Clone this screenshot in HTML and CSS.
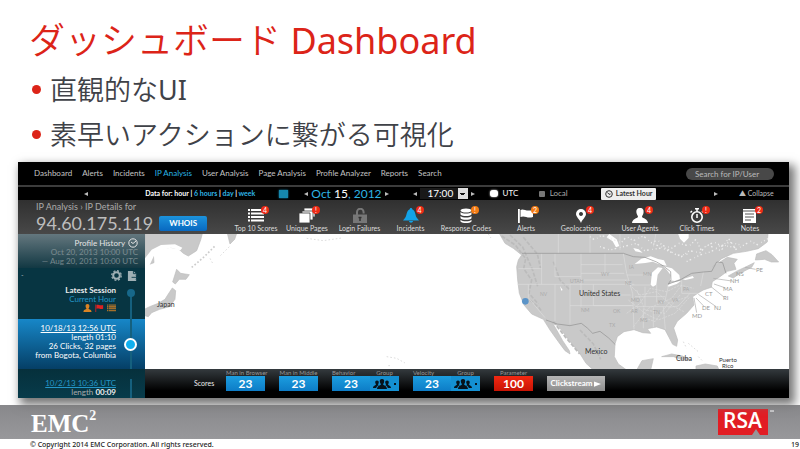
FILE: index.html
```html
<!DOCTYPE html>
<html lang="ja">
<head>
<meta charset="utf-8">
<title>ダッシュボード Dashboard</title>
<link rel="stylesheet" href="styles.css">
</head>
<body>
<svg class="defs" aria-hidden="true">
  <symbol id="list" viewBox="0 0 16 13"><path d="M0 1h2M3 1h13M0 4.500h2M3 4.500h13M0 8h2M3 8h13M0 11.500h2M3 11.500h13" stroke="currentColor" stroke-width="1.800"/></symbol>
  <symbol id="person" viewBox="0 0 16 15"><path d="M8 0c3 0 4 2 3.500 5-.4 2-1.500 2.500-1.500 4 1 1.500 5.500 1.500 6 6H0c.5-4.500 5-4.500 6-6 0-1.500-1.100-2-1.500-4C4 2 5 0 8 0z" fill="currentColor"/></symbol>
  <symbol id="flag" viewBox="0 0 16 15"><path d="M0 1h1.800v14H0zM2.500 2c3-2 5 2 12.500 0v7c-6 2-8-2-12.500 0z" fill="currentColor"/></symbol>
  <symbol id="group" viewBox="0 0 18 10"><path d="M9 0c2 0 2.600 1.500 2 3.500L10 5.500c1 1 3.500 1 4 4.500H4c.5-3.500 3-3.500 4-4.500L7 3.500C6.400 1.500 7 0 9 0zM4 1.500c1.500 0 2 1 1.700 2.500L5 5.500l.7.8C4 7 3.500 8 3.200 9H0c.2-2.500 2-2 3-3.500L2.300 4C2 2.500 2.500 1.500 4 1.500zM14 1.500c-1.500 0-2 1-1.700 2.500l.7 1.500-.7.8C14 7 14.500 8 14.800 9H18c-.2-2.500-2-2-3-3.500l.7-1.500c.3-1.500-.2-2.500-1.700-2.500z" fill="currentColor"/></symbol>
</svg>
<main class="slide">
  <header class="intro">
    <h1>ダッシュボード <span>Dashboard</span></h1>
    <ul>
      <li><p>直観的な<span>UI</span></p></li>
      <li><p>素早いアクションに繋がる可視化</p></li>
    </ul>
  </header>

  <section class="app">
    <nav class="nav">
      <a href="#">Dashboard</a><a href="#">Alerts</a><a href="#">Incidents</a><a href="#" class="current">IP Analysis</a><a href="#">User Analysis</a><a href="#">Page Analysis</a><a href="#">Profile Analyzer</a><a href="#">Reports</a><a href="#">Search</a>
      <input type="search" class="search" placeholder="Search for IP/User" aria-label="Search for IP/User">
    </nav>

    <div class="timebar">
      <button class="arrow left" aria-label="Earlier"></button>
      <div class="range">Data for: hour | <a href="#">6 hours</a> | <a href="#">day</a> | <a href="#">week</a></div>
      <button class="calendar" aria-label="Calendar"></button>
      <div class="date"><button class="arrow left" aria-label="Previous day"></button><span>Oct <b>15</b>, 2012</span><button class="arrow" aria-label="Next day"></button></div>
      <div class="hour"><button class="arrow left" aria-label="Previous hour"></button><select aria-label="Hour"><option>17:00</option></select><button class="arrow" aria-label="Next hour"></button></div>
      <label class="zone"><input type="radio" name="zone" checked>UTC</label>
      <label class="zone muted"><input type="radio" name="zone">Local</label>
      <button class="latest"><svg viewBox="0 0 8 8"><circle cx="4" cy="4" r="3.300"/><path d="M2.500 2.500 4 4.300 5.500 4"/></svg>Latest Hour</button>
      <button class="arrow" aria-label="Later"></button>
      <button class="collapse">▲ Collapse</button>
    </div>

    <div class="toolbar">
      <div class="ip">
        <p>IP Analysis › IP Details for</p>
        <div class="address"><h2>94.60.175.119</h2><button class="whois">WHOIS</button></div>
      </div>
      <button class="tool"><span class="icon"><svg viewBox="0 0 16 15"><use href="#list" width="16" height="13" y="1"/></svg><i>4</i></span>Top 10 Scores</button>
      <button class="tool"><span class="icon"><svg viewBox="0 0 16 15"><g fill="currentColor" stroke="#3a3a3a" stroke-width=".8"><path d="M5 0h11v9H5z"/><path d="M3 3h11v9H3z"/><path d="M0 5h11v10H0z"/></g></svg><i>!</i></span>Unique Pages</button>
      <button class="tool"><span class="icon dim"><svg viewBox="0 0 16 15"><path d="M5 7V4a3.300 3.300 0 0 1 6.600 0v1.500" fill="none" stroke="currentColor" stroke-width="2"/><path d="M1 6.500h14V15H1z" fill="currentColor"/><path d="M8 9v4M6.500 9.500h3" stroke="#333" stroke-width="1.500"/></svg></span>Login Failures</button>
      <button class="tool"><span class="icon blue"><svg viewBox="0 0 16 15"><path d="M8 0c1 0 1.200.6 1.200 1.300C13 3 12 8 14 10l2 2.500H0L2 10c2-2 1-7 4.800-8.700C6.800.6 7 0 8 0zM6 13h4c0 2.300-4 2.300-4 0z" fill="currentColor"/></svg><i>4</i></span>Incidents</button>
      <button class="tool"><span class="icon"><svg viewBox="0 0 16 15"><g fill="currentColor"><ellipse cx="8" cy="2.500" rx="5.500" ry="2"/><path d="M2.500 4c2 2 9 2 11 0v2.500c-2 2-9 2-11 0zM2.500 8c2 2 9 2 11 0v2.300c-2 2-9 2-11 0zM2.500 11.800c2 2 9 2 11 0v1.700c-2 2-9 2-11 0z"/></g></svg><i class="warn">!</i></span>Response Codes</button>
      <button class="tool"><span class="icon"><svg viewBox="0 0 16 15"><use href="#flag" width="16" height="15"/></svg><i class="warn">2</i></span>Alerts</button>
      <button class="tool"><span class="icon"><svg viewBox="0 0 16 15"><path fill-rule="evenodd" d="M8 1a5 5 0 0 1 5 5c0 3-3.500 5-5 9-1.500-4-5-6-5-9a5 5 0 0 1 5-5zm0 3a2 2 0 1 0 .01 0z" fill="currentColor"/></svg><i>4</i></span>Geolocations</button>
      <button class="tool"><span class="icon"><svg viewBox="0 0 16 15"><use href="#person" width="16" height="15"/></svg><i>4</i></span>User Agents</button>
      <button class="tool"><span class="icon"><svg viewBox="0 0 16 15"><circle cx="8" cy="9" r="5.200" fill="none" stroke="currentColor" stroke-width="1.600"/><path d="M6 .8h4M8 1v2.500M8 6v4M13 3l1.500 1.500M3 3 1.500 4.500" stroke="currentColor" stroke-width="1.500"/></svg><i>!</i></span>Click Times</button>
      <button class="tool"><span class="icon"><svg viewBox="0 0 16 15"><path d="M1 1h13v14H1z" fill="currentColor"/><path d="M1 3h13M3 6h9M3 9h9M3 12h6" stroke="#555"/></svg><i>2</i></span>Notes</button>
    </div>

    <div class="body">
      <aside class="sidebar">
        <div class="history">
          <h3>Profile History <svg viewBox="0 0 10 10"><circle cx="5" cy="5" r="4.200"/><path d="M3 4l2 1.500L8 3"/></svg></h3>
          <p>Oct 20, 2013 10:00 UTC<br>— Aug 20, 2013 10:00 UTC</p>
        </div>
        <div class="actions">
          <span>-</span>
          <button aria-label="Settings"><svg viewBox="0 0 12 12"><circle cx="6" cy="6" r="3.600" fill="none" stroke="currentColor" stroke-width="2.200"/><circle cx="6" cy="6" r="5.200" fill="none" stroke="currentColor" stroke-width="1.400" stroke-dasharray="2.200 1.880"/></svg></button>
          <button aria-label="Export"><svg viewBox="0 0 12 12"><path d="M1 1h6l3 3v8H1z" fill="currentColor"/><path d="M7 1v3h3M5 8h7M9.500 6 12 8l-2.500 2" fill="none" stroke="#0b3c4b"/></svg></button>
        </div>
        <article class="session first">
          <div class="info">
            <h4>Latest Session</h4>
            <a href="#" class="plain">Current Hour</a>
            <div class="marks">
              <svg class="orange" viewBox="0 0 16 15"><use href="#person" width="16" height="15"/></svg>
              <svg class="red" viewBox="0 0 16 15"><use href="#flag" width="16" height="15"/></svg>
              <svg class="orange" viewBox="0 0 16 13"><use href="#list" width="16" height="13"/></svg>
            </div>
          </div>
          <div class="track"><span class="dot"></span></div>
        </article>
        <article class="session active">
          <div class="info">
            <a href="#">10/18/13 12:56 UTC</a>
            <p>length 01:10<br>26 Clicks, 32 pages<br>from Bogota, Columbia</p>
          </div>
          <div class="track"><span class="dot ring"></span></div>
        </article>
        <article class="session last">
          <div class="info">
            <a href="#">10/2/13 10:36 UTC</a>
            <p>length <b>00:09</b></p>
          </div>
          <div class="track"></div>
        </article>
      </aside>

      <div class="main">
        <svg class="map" viewBox="0 0 644 135" preserveAspectRatio="xMidYMid slice" role="img" aria-label="Map">
          <g transform="translate(-135 -4) scale(.3333)">
            <path class="land" d="M405 0H580L572 30 560 62 535 78 520 70 505 56 480 52 450 58 430 72 432 98 405 108z"/>
            <path class="land" d="M500 118l12 12 26 4-10 14-20 0-12 14-8-6zM487 174l10 8-2 26-16 22-30 8-24 10-10 12-14-4-6-14 24-12 26-10 20-12 10-16z"/>
            <path class="sea" d="M405 85l20-26 28-14 42-2 22 10-6 8-28-8-28 8-22 14-14 30-14 8z"/>
            <path class="isles" d="M545 112l15-12 25-22 30-30"/>
          </g>
          <g transform="translate(65 -4) scale(.3333)">
            <path class="land" d="M52 10h28l-6 18-14 14z"/>
            <path class="isles faint" d="M58 50 30 78M0 85l8 15M290 25l50 7 55-8M530 380l30 5 25 14M535 407l10 0M835 12l8 12"/>
          </g>
          <g transform="translate(345 -4) scale(.3333)">
            <path class="land" d="M22 0 45 40 70 55 95 75 85 90 80 110 83 150 88 190 102 225 125 252 160 268 180 300 205 335 225 362 240 372 238 362 218 332 200 300 188 280 205 288 238 332 268 368 288 400 310 420H410L385 402 373 380 375 342 382 320 402 305 432 299 458 308 482 310 472 296 500 291 525 299 537 322 548 343 560 349 563 330 551 294 562 274 590 250 612 225 608 200 626 188 640 180 664 172 667 155 690 140 712 124 738 118 732 100 742 88 712 82 690 96 668 110 695 86 730 70 770 64 805 56 832 36 835 0z"/>
            <path class="land" d="M800 72l28-10 18 12 20 22-22 0-20-8-28 2zM715 138l28-16 30-14 20-10-8 14-35 18-20 14zM440 420l16-28 34-6-8 34zM515 380l30-8 32 6 28 12-32-2-22-8zM618 408l28-6 36 6 6 14h-70z"/>
            <path class="sea" d="M434 102l20-16 28-7 22 8 18 4 8 16-22-4-20-8-22 4zM482 164l4-36 18-16 14 2-15 20-4 30-10 6zM518 108l28 7 22 20 2 12-16 6-14-2 2-16-12-16zM532 168l12-10 30-6-14 10-24 8zM578 148l30-10 4 6-26 6zM358 12l22 16 8 20-10 4-10-18-18-12zM560 0l10 26 12 12 14-14 0-24zM430 54l16 4 12 10-22-4zM210 168l8 12-4 2z"/>
            <path class="speck" d="M300 20l14 10 20-14 60 22 16-18 20 12 30-14 24 20 20-8 12 16 30 8 22-14 30 8 20-20 14 30 40-22 26 14 18-24 22 32 44-24 20 10 32-18M330 50l30 10 80-20 24 22 50-8 60 26 24-18 32 6 22-24 40 18 24-26 32 8M590 95l40-20 34-10 28-20 46 8M490 42l40 14 30 20 38-4"/>
            <path class="ridge" d="M35 18l42 28 30 40-6 30 24 34-8 40 28 32M60 15l38 36 30 70 15 48M100 22l42 50 10 44M190 95l20 55 28 28M120 210l28 24 8 12M190 275l35 45 44 52M270 300l40 42 22 46"/>
            <path class="state" d="M85 116h70M83 163h350M155 70v93M195 70v70h78M273 70v160M195 163v110M115 163v40l50 60M240 163v118M273 104h125M273 130h130M273 150h140M310 195h112M310 163v64h115M240 227h190M345 70v60M400 70l10 60 18 60 4 108M435 200h90M440 230h100M465 170v60M500 165v52M535 168l-10 45M460 235v60M490 232v60M520 230l6 68M575 150v40h50M600 190l-35 38-30 4M640 128l-8 40M410 135h66M420 165h60M300 0v70M205 0v70M390 0v60M500 0l-10 50"/>
            <path class="roads" d="M410 250l40-30 30-45 50 10 40-20 40 10M415 210l50 40 40 20 50-20 45-50M430 290l45-55 70-30 30-40M405 150l45 45 50-10 42 40 40 20M440 180l25 60 60 10 45-55M455 260l40 15 40-55 60-20"/>
            <path class="border" d="M96 70H400L430 80 465 82 500 96 520 108 542 125 543 150 535 162 570 150 605 130 640 126 665 124 680 96 698 98 708 130M168 270l34 12 38 5 34-7 18 14 16 16 22-6 26 20 20 20"/>
            <path class="lead" d="M765 112l32 6M670 145l55 8M672 162l35 12M663 170l40 32M625 193l55 38M618 204l25 26M612 204l8 44"/>
            <path class="isles faint" d="M580 335l10 20M595 340l30 25M625 380l14 14"/>
            <circle cx="106" cy="214" r="10" class="pin"/>
          </g>
          <g class="places">
            <text x="12" y="73">Japan</text>
            <text x="434" y="62">United States</text>
            <text x="440" y="120">Mexico</text>
            <text x="531" y="127">Cuba</text>
            <text x="574" y="128" class="small">Puerto</text>
            <text x="577" y="134" class="small">Rico</text>
          </g>
          <g class="codes">
            <text x="425" y="49">UTAH</text><text x="395" y="62">NV</text><text x="456" y="42">WY</text><text x="480" y="51">NE</text><text x="484" y="35">IA</text><text x="498" y="42">MN</text><text x="436" y="78">NM</text><text x="464" y="93">TX</text><text x="468" y="79">OK</text><text x="486" y="68">MO</text><text x="486" y="79">AR</text><text x="513" y="70">KY</text><text x="508" y="80">TN</text><text x="495" y="88">MS</text><text x="527" y="68">VA</text><text x="538" y="57">PA</text>
          </g>
          <g class="codes coast">
            <text x="560" y="62">CT</text><text x="557" y="76">DE</text><text x="569" y="76">NJ</text><text x="547" y="84">MD</text><text x="578" y="66">RI</text><text x="578" y="57">MA</text><text x="585" y="49">NH</text><text x="591" y="42">NS</text><text x="611" y="38">PE</text>
          </g>
        </svg>
        <div class="scores">
          <span class="caption">Scores</span>
          <div class="score"><span>Man in Browser</span><b>23</b></div>
          <div class="score"><span>Man in Middle</span><b>23</b></div>
          <div class="score wide"><span>Behavior</span><span>Group</span><b>23</b><button aria-label="Behavior group"><svg viewBox="0 0 18 10"><use href="#group" width="18" height="10"/></svg></button></div>
          <div class="score wide"><span>Velocity</span><span>Group</span><b>23</b><button aria-label="Velocity group"><svg viewBox="0 0 18 10"><use href="#group" width="18" height="10"/></svg></button></div>
          <div class="score alert"><span>Parameter</span><b>100</b></div>
          <button class="stream">Clickstream <svg viewBox="0 0 8 6"><path d="M0 0l8 3-8 3z" fill="#fff"/></svg></button>
        </div>
      </div>
    </div>
  </section>

  <footer>
    <div class="band">
      <div class="emc">EMC<sup>2</sup></div>
      <svg class="rsa" viewBox="0 0 57 26" role="img" aria-label="RSA">
        <path fill="#e21d24" d="M0 0h50v26h-8l-4-6-4 6H0z"/>
        <text x="5" y="19">RSA</text>
        <path fill="#c9c9cb" d="M52 1h4v2h-4z"/>
      </svg>
    </div>
    <div class="legal"><span>© Copyright 2014 EMC Corporation. All rights reserved.</span><span>19</span></div>
  </footer>
</main>
</body>
</html>
```
FILE: styles.css
```css
* { box-sizing: border-box; }
body { margin: 0; background: #fff; font-family: Lato, "Noto Sans CJK JP", sans-serif; }
h1, h2, h3, h4, p, ul { margin: 0; padding: 0; font-weight: 400; }
a { color: inherit; text-decoration: none; }
button, input, select { font: inherit; color: inherit; border: 0; padding: 0; margin: 0; background: none; }
svg { display: block; }
.defs { position: absolute; width: 0; height: 0; }
.slide { display: flex; flex-direction: column; }

.intro { padding: 15px 29px 0; font-family: "Noto Sans", "Noto Sans CJK JP", sans-serif; }
.intro h1 { font-size: 36px; line-height: 52px; color: #dc2418; font-weight: 350; }
.intro span { font-weight: 400; }
.intro ul { list-style: none; padding-bottom: 4px; }
.intro p { font-weight: 350; }
.intro li { display: flex; align-items: center; gap: 9px; font-size: 27px; line-height: 45px; color: #3f4248; }
.intro li::before { content: ""; width: 9px; height: 9px; border-radius: 50%; background: #dc2418; margin-left: 3px; }

.app { position: relative; margin: 1px 11px 0 18px; background: #000; color: #ddd; font-size: 7px; line-height: 9px; box-shadow: 4px 5px 9px 2px #777; }
.nav { display: flex; align-items: center; gap: 10px; height: 23px; padding: 0 15px 0 16px; color: #c4c4c4; font-size: 8px; white-space: nowrap; }
.nav .current { color: #28b4e6; }
.search { margin-left: auto; width: 88px; height: 12px; padding: 0 0 0 4px; border-radius: 6px; background: #484848; text-align: center; appearance: none; }
.search::placeholder { color: #bbb; }

.timebar { display: grid; grid-template-columns: 66fr 61fr 134fr 25fr 108fr 77fr 49fr 62fr 113fr 25fr 50fr; align-items: center; border-top: 2px solid #3c3c3c; height: 15px; color: #fff; white-space: nowrap; }
.timebar > :first-child { grid-column: 2; }
.arrow { width: 0; height: 0; border: solid transparent; border-width: 2px 0 2px 4px; border-left-color: #bbb; }
.arrow.left { border-width: 2px 4px 2px 0; border-right-color: #bbb; }
.range { font-weight: 700; }
.range a, .date { color: #2eb4e4; }
.calendar { width: 9px; height: 8px; background: #1687ad; box-shadow: 0 0 2px #16a0d0; }
.date, .hour { display: flex; align-items: center; gap: 3px; }
.date { font-size: 12px; }
.date b { color: #fff; font-weight: 400; }
.hour select { width: 48px; height: 11px; padding: 0 14px 0 8px; border-radius: 0; appearance: none; font-size: 10px; line-height: 11px; background: linear-gradient(#111, #111) 40px 5px / 5px 1px no-repeat, linear-gradient(#111, #111) 41px 6px / 3px 1px no-repeat, linear-gradient(#ddd, #ddd) 38px 0 / 10px 11px no-repeat, #191919; }
.zone { display: flex; align-items: center; gap: 5px; font-size: 8px; }
.zone input { appearance: none; width: 8px; height: 7px; border-radius: 3px; background: #fff; box-shadow: 0 0 2px #fff; }
.muted { color: #aaa; }
.muted input { width: 6px; height: 6px; border-radius: 1px; background: #777; box-shadow: none; }
.latest { justify-self: start; display: flex; align-items: center; gap: 3px; height: 12px; padding: 0 4px; background: #eee; color: #333; border-radius: 1px; font-weight: 700; font-size: 7px; }
.latest svg { width: 8px; height: 8px; fill: none; stroke: #333; }
.collapse { text-align: left; color: #bbb; }

.toolbar { display: grid; grid-template-columns: 212fr 52fr 50fr 55fr 47fr 64fr 56fr 54fr 64fr 50fr 56fr 11fr; height: 34px; background: linear-gradient(#303030, #484848); }
.ip { padding: 2px 0 0 18px; color: #aaa; font-size: 9px; line-height: 10px; white-space: nowrap; }
.address { display: flex; align-items: center; gap: 6px; }
.address h2 { font-size: 18px; line-height: 22px; font-weight: 400; color: #bdbdbd; }
.whois { width: 48px; height: 15px; border-radius: 2px; background: linear-gradient(#1c93dc, #0868c0); color: #fff; font-size: 8px; font-weight: 700; }
.tool { display: flex; flex-direction: column; align-items: center; gap: 1px; padding-top: 8px; font-size: 7px; line-height: 9px; white-space: nowrap; color: #ddd; }
.icon { position: relative; color: #fff; }
.icon svg { width: 18px; height: 15px; }
.icon i { position: absolute; top: -2px; right: -4px; width: 8px; height: 8px; border-radius: 4px; background: #ee2b16; color: #fff; font-style: normal; font-size: 7px; line-height: 8px; text-align: center; }
.icon .warn { background: #f47c14; }
.dim { color: #777; }
.blue { color: #12a3e8; }

.body { display: grid; grid-template-columns: 127fr 644fr; }
.sidebar { background: #073542; text-align: right; font-size: 7px; }
.history { height: 34px; padding: 4px 7px 0 0; background: linear-gradient(#64777e, #123843); color: #9aa5a8; line-height: 9px; }
.history h3 { display: flex; justify-content: flex-end; align-items: center; gap: 3px; font-size: 8px; line-height: 9px; color: #e4e4e4; }
.history p { font-size: 8px; opacity: .7; white-space: nowrap; }
.history svg { width: 10px; height: 10px; fill: none; stroke: currentColor; }
.actions { display: flex; align-items: center; gap: 5px; height: 14px; padding: 0 7px 0 3px; color: #9fb0b5; }
.actions span { margin-right: auto; }
.actions svg { width: 11px; height: 11px; }
.session { display: grid; grid-template-columns: 98fr 29fr; color: #eee; line-height: 9px; }
.session a { color: #2496c8; text-decoration: underline; font-size: 8px; }
.session .plain { text-decoration: none; }
.info { display: flex; flex-direction: column; align-items: flex-end; white-space: nowrap; }
.first { height: 37px; }
.first .info { padding-top: 4px; }
.first h4 { font-size: 8px; font-weight: 700; }
.marks { display: flex; align-items: center; gap: 3px; }
.marks svg { width: 9px; height: 8px; }
.orange { color: #d98324; }
.red { color: #d22; }
.active { height: 50px; background: linear-gradient(#1787c8, #053f66); }
.active .info { padding-top: 5px; font-size: 8px; color: #fff; }
.active a { color: #fff; }
.last { height: 29px; padding-top: 10px; background: linear-gradient(#06303c, #073b4a); }
.last p { font-size: 8px; color: #aaa; }
.last b { color: #eee; }
.track { display: flex; align-items: center; justify-content: center; background: linear-gradient(#15607e, #15607e) center / 2px 100% no-repeat; }
.first .track { align-items: flex-start; padding-top: 7px; background: linear-gradient(#15607e, #15607e) center 10px / 2px 100% no-repeat; }
.dot { width: 8px; height: 8px; border-radius: 50%; background: #17688a; }
.ring { width: 13px; height: 13px; border: 2px solid #fff; background: #10b0ef; }

.main { display: flex; flex-direction: column; min-width: 0; }
.map { width: 100%; height: 135px; background: #fff; }
.land { fill: #c9c9c9; stroke: #bdbdbd; stroke-width: 2; stroke-linejoin: round; }
.sea { fill: #fff; }
.map path:not(.land):not(.sea) { fill: none; }
.isles { stroke: #ccc; stroke-width: 5; stroke-dasharray: 5 6; }
.faint { stroke: #ddd; stroke-width: 3; }
.speck { stroke: #eee; stroke-width: 4; stroke-dasharray: 3 7 5 11 2 8; }
.ridge { stroke: #bbb; stroke-width: 5; stroke-dasharray: 12 5; }
.state, .roads { stroke: #ddd; stroke-width: 2; }
.roads { stroke-dasharray: 7 3; }
.border { stroke: #8f8f8f; stroke-width: 2; }
.lead { stroke: #aaa; stroke-width: 2; }
.pin { fill: #5b94c8; }
.places { fill: #333; font-size: 7px; }
.places .small { font-size: 6px; }
.codes { fill: #aaa; font-size: 5px; }
.coast { fill: #999; font-size: 6px; }

.scores { display: flex; gap: 14px; height: 29px; padding: 0 0 0 49px; background: linear-gradient(#343a3e, #000 75%); white-space: nowrap; }
.caption { align-self: center; width: 18px; font-size: 7px; color: #eee; }
.score { display: grid; grid-template-rows: 7px 15px; grid-template-columns: 39px; font-size: 6px; line-height: 7px; color: #999; text-align: center; }
.score b { background: linear-gradient(#1c9ee0, #0d7cc6); color: #fff; font-size: 12px; line-height: 15px; }
.wide { grid-template-columns: 38px 29px; }
.wide span:first-child { text-align: left; }
.score button { display: flex; align-items: center; justify-content: center; gap: 3px; background: #1490d2; color: #06131c; }
.score button::after { content: ""; width: 2px; height: 2px; background: #06131c; }
.score svg { width: 18px; height: 10px; }
.alert b { background: linear-gradient(#f32812, #c81404); }
.stream { display: flex; align-items: center; justify-content: center; gap: 2px; width: 58px; height: 15px; margin-top: 7px; background: linear-gradient(#b5b5b5, #8d8d8d); color: #fff; font-size: 8px; font-weight: 700; }
.stream svg { width: 7px; height: 6px; }

footer { margin-top: 7px; }
.band { display: flex; align-items: center; justify-content: space-between; height: 34px; padding: 0 25px 0 31px; background: linear-gradient(#88888b, #98989b); }
.emc { color: #fff; font: 700 25px/30px "Liberation Serif", serif; padding-top: 3px; }
.emc sup { font-size: 14px; line-height: 0; vertical-align: 12px; }
.rsa { width: 57px; height: 26px; overflow: visible; }
.rsa text { fill: #fff; font: 600 21px "Open Sans", sans-serif; }
.legal { display: flex; justify-content: space-between; padding: 1px 1px 0 30px; color: #222; font: 500 7px/10px "Noto Sans", sans-serif; }
```
